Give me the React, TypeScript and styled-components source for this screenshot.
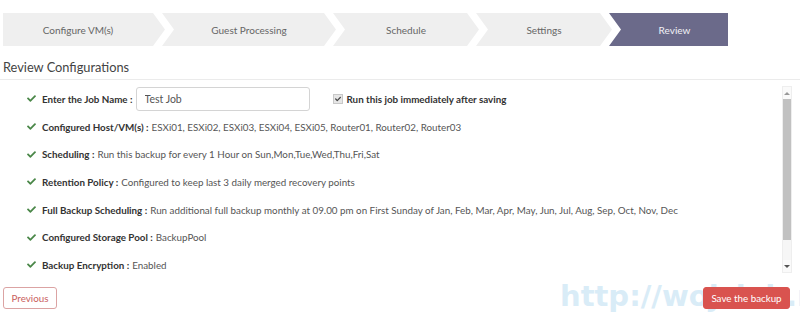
import React from "react";
import styled, { createGlobalStyle } from "styled-components";
import { FaCheck } from "react-icons/fa";

const GlobalStyle = createGlobalStyle`
  html, body {
    margin: 0;
    padding: 0;
    background: #fff;
  }
  body {
    font-family: Lato, "Open Sans", sans-serif;
    width: 800px;
    height: 314px;
    overflow: hidden;
  }
`;

const steps = [
  { label: "Configure VM(s)", width: 162 },
  { label: "Guest Processing", width: 174 },
  { label: "Schedule", width: 146 },
  { label: "Settings", width: 136 },
  { label: "Review", width: 119, active: true }
];

const rows = [
  {
    label: "Configured Host/VM(s)",
    value:
      "ESXi01, ESXi02, ESXi03, ESXi04, ESXi05, Router01, Router02, Router03"
  },
  {
    label: "Scheduling",
    value: "Run this backup for every 1 Hour on Sun,Mon,Tue,Wed,Thu,Fri,Sat"
  },
  {
    label: "Retention Policy",
    value: "Configured to keep last 3 daily merged recovery points"
  },
  {
    label: "Full Backup Scheduling",
    value:
      "Run additional full backup monthly at 09.00 pm on First Sunday of Jan, Feb, Mar, Apr, May, Jun, Jul, Aug, Sep, Oct, Nov, Dec"
  },
  { label: "Configured Storage Pool", value: "BackupPool" },
  { label: "Backup Encryption", value: "Enabled" }
];

/**
 * Review step of the backup job wizard.
 */
const App: React.FC = () => (
  <Page>
    <GlobalStyle />
    <StepBar>
      {steps.map((step, i) => (
        <Step
          key={step.label}
          $width={step.width}
          $first={i === 0}
          $last={i === steps.length - 1}
          $active={!!step.active}
        >
          {step.label}
        </Step>
      ))}
    </StepBar>
    <Heading>Review Configurations</Heading>
    <ListArea>
      <List>
        <Row>
          <CheckIcon />
          <Label>Enter the Job Name :</Label>
          <JobInput defaultValue="Test Job" />
          <RunNow>
            <FakeCheckbox>
              <FaCheck size={6} />
            </FakeCheckbox>
            Run this job immediately after saving
          </RunNow>
        </Row>
        {rows.map((row) => (
          <Row key={row.label}>
            <CheckIcon />
            <Label>{row.label} :</Label>
            <Value>{row.value}</Value>
          </Row>
        ))}
      </List>
      <Scrollbar>
        <ScrollArrow $up />
        <ScrollThumb />
        <ScrollTrack />
        <ScrollArrow />
      </Scrollbar>
    </ListArea>
    <Footer>
      <Watermark>http://wojcieh.net</Watermark>
      <OutlineButton>Previous</OutlineButton>
      <DangerButton>Save the backup</DangerButton>
    </Footer>
  </Page>
);

const CheckIcon = () => (
  <CheckMark>
    <FaCheck size={9} />
  </CheckMark>
);

const Page = styled.div`
  width: 800px;
  height: 314px;
  overflow: hidden;
`;

const StepBar = styled.div`
  display: flex;
  margin: 13px 0 0 3px;
  height: 33px;
`;

const Step = styled.div<{
  $width: number;
  $first: boolean;
  $last: boolean;
  $active: boolean;
}>`
  flex: 0 0 ${(p) => p.$width}px;
  margin-left: ${(p) => (p.$first ? 0 : -3)}px;
  padding-left: ${(p) => (p.$first ? 0 : 12)}px;
  padding-right: ${(p) => (p.$last ? 0 : 12)}px;
  box-sizing: border-box;
  display: flex;
  align-items: center;
  justify-content: center;
  font-size: 10px;
  color: ${(p) => (p.$active ? "#f2f2f6" : "#666")};
  background: ${(p) => (p.$active ? "#6b6a8a" : "#efefef")};
  clip-path: ${(p) =>
    p.$last
      ? "polygon(0 0, 100% 0, 100% 100%, 0 100%, 12px 50%)"
      : p.$first
      ? "polygon(0 0, calc(100% - 12px) 0, 100% 50%, calc(100% - 12px) 100%, 0 100%)"
      : "polygon(0 0, calc(100% - 12px) 0, 100% 50%, calc(100% - 12px) 100%, 0 100%, 12px 50%)"};
`;

const Heading = styled.h4`
  margin: 11px 0 0;
  padding: 0 0 2px 3px;
  height: 20px;
  line-height: 20px;
  font-size: 12.8px;
  font-weight: 400;
  color: #444;
  border-bottom: 1px solid #ebebeb;
`;

const ListArea = styled.div`
  display: flex;
  margin-top: 5px;
  padding-right: 8px;
`;

const List = styled.div`
  flex: 1;
`;

const Row = styled.div`
  display: flex;
  align-items: center;
  height: 27.7px;
  padding-left: 27px;
  font-size: 9.8px;
  white-space: nowrap;
`;

const CheckMark = styled.span`
  display: inline-flex;
  color: #4a8748;
  margin-right: 6px;
`;

const Label = styled.strong`
  font-weight: 700;
  color: #333;
  margin-right: 3px;
`;

const Value = styled.span`
  color: #555;
`;

const JobInput = styled.input`
  width: 174px;
  height: 24px;
  box-sizing: border-box;
  border: 1px solid #d4d4d4;
  border-radius: 3px;
  padding: 0 8px;
  font-family: Lato, "Open Sans", sans-serif;
  font-size: 10.5px;
  color: #555;
  outline: none;
`;

const RunNow = styled.label`
  display: flex;
  align-items: center;
  margin-left: 23px;
  font-weight: 700;
  color: #333;
`;

const FakeCheckbox = styled.span`
  display: inline-flex;
  align-items: center;
  justify-content: center;
  width: 8px;
  height: 8px;
  margin-right: 4px;
  background: #e6e6e6;
  border: 1px solid #c8c8c8;
  color: #444;
`;

const Scrollbar = styled.div`
  display: flex;
  flex-direction: column;
  width: 10px;
  height: 187px;
  margin-top: 1px;
  background: #f6f6f6;
  border: 1px solid #eee;
  box-sizing: border-box;
`;

const ScrollArrow = styled.div<{ $up?: boolean }>`
  flex: 0 0 12px;
  display: flex;
  align-items: center;
  justify-content: center;
  background: #fafafa;
  &::before {
    content: "";
    border-left: 3px solid transparent;
    border-right: 3px solid transparent;
    ${(p) =>
      p.$up ? "border-bottom: 3px solid #999;" : "border-top: 3px solid #555;"}
  }
`;

const ScrollThumb = styled.div`
  flex: 0 0 141px;
  background: #c1c1c1;
`;

const ScrollTrack = styled.div`
  flex: 1;
`;

const Footer = styled.div`
  position: relative;
  display: flex;
  justify-content: space-between;
  align-items: center;
  margin-top: 8px;
  padding: 0 10px 0 3px;
`;

const Watermark = styled.span`
  position: absolute;
  left: 560px;
  top: -8px;
  font-family: "DejaVu Sans", sans-serif;
  font-weight: 700;
  font-size: 29px;
  color: #d9ecf7;
  white-space: nowrap;
  pointer-events: none;
`;

const ButtonBase = styled.button`
  position: relative;
  height: 22px;
  padding: 0 7px;
  border-radius: 3px;
  font-family: Lato, "Open Sans", sans-serif;
  font-size: 9.8px;
  white-space: nowrap;
  cursor: pointer;
`;

const OutlineButton = styled(ButtonBase)`
  width: 54px;
  background: #fff;
  border: 1px solid #dba3a3;
  color: #c9605d;
`;

const DangerButton = styled(ButtonBase)`
  width: 87px;
  background: #d9534f;
  border: 1px solid #d9534f;
  color: #fff;
`;

export default App;
